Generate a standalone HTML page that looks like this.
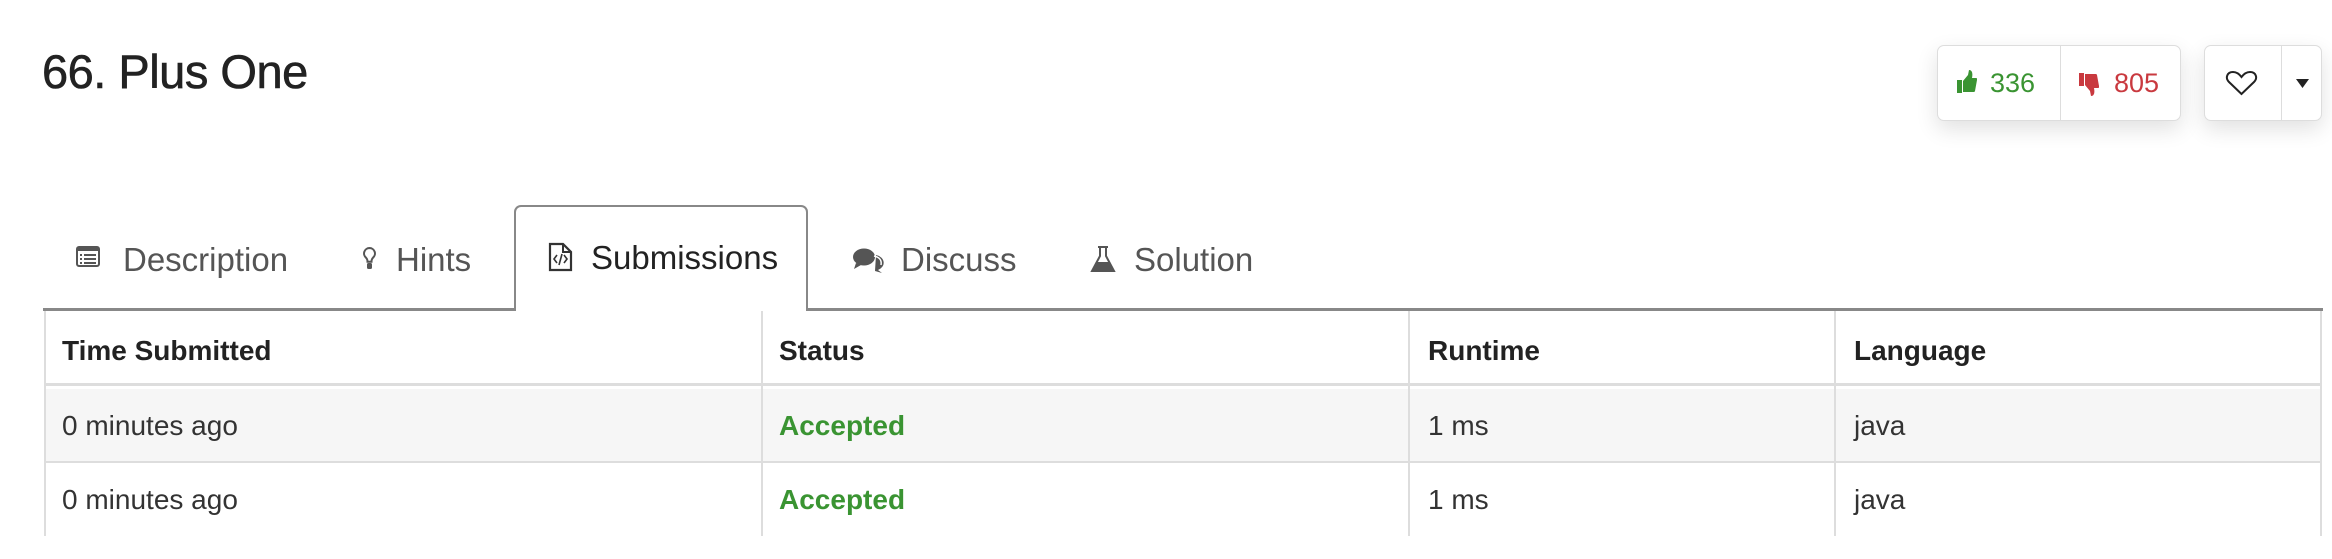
<!DOCTYPE html>
<html><head><meta charset="utf-8"><style>
*{box-sizing:border-box;margin:0;padding:0}
body{width:2332px;height:536px;background:#fff;font-family:"Liberation Sans",Arial,sans-serif;position:relative;overflow:hidden;color:#333}
.abs{position:absolute}
h1{position:absolute;left:42px;top:44px;font-size:47px;font-weight:normal;color:#222;letter-spacing:-0.5px;-webkit-text-stroke:0.6px #222}
.tabline{position:absolute;left:43px;top:308px;width:2280px;height:3px;background:#888}
.tab{position:absolute;left:514px;top:205px;width:294px;height:106px;border:2px solid #888;border-bottom:none;border-radius:7px 7px 0 0;background:#fff}
.tt{position:absolute;top:241px;font-size:33px;color:#555;white-space:nowrap}
.tbl{position:absolute;left:44px;top:311px;width:2278px;height:225px;border-left:2px solid #ddd;border-right:2px solid #ddd}
.row{position:absolute;left:0;width:100%}
.cell{position:absolute;top:0;height:100%;font-size:28px;line-height:1}
.vl{position:absolute;top:0;width:2px;height:225px;background:#ddd}
.btn{position:absolute;top:45px;height:76px;border:1px solid #ddd;border-radius:7px;background:#fff;box-shadow:0 8px 22px rgba(0,0,0,0.12)}
</style></head><body>
<h1>66. Plus One</h1>

<div class="tabline"></div>
<div class="tab"></div>
<svg class="abs" style="left:76px;top:246px" width="24" height="21" viewBox="0 0 24 21"><rect x="1" y="1" width="22" height="19" rx="2" fill="none" stroke="#555" stroke-width="2"/><rect x="1" y="1" width="22" height="4" fill="#555"/><g fill="#555"><rect x="4" y="8" width="2" height="2"/><rect x="8" y="8" width="12" height="2"/><rect x="4" y="12" width="2" height="2"/><rect x="8" y="12" width="12" height="2"/><rect x="4" y="16" width="2" height="2"/><rect x="8" y="16" width="12" height="2"/></g></svg>
<div class="tt" style="left:123px">Description</div>
<svg class="abs" style="left:362px;top:246px" width="15" height="27" viewBox="0 0 15 27"><path d="M7.5 2a5.5 5.5 0 0 0-3.5 9.7c1 1 1.5 2.5 1.5 4h4c0-1.5.5-3 1.5-4A5.5 5.5 0 0 0 7.5 2z" fill="none" stroke="#555" stroke-width="2"/><rect x="5" y="17" width="5" height="6" rx="1.5" fill="#555"/></svg>
<div class="tt" style="left:396px">Hints</div>
<svg class="abs" style="left:548px;top:242px" width="25" height="30" viewBox="0 0 25 30"><path d="M2 2h13l8 8v18H2z" fill="none" stroke="#333" stroke-width="2.2"/><path d="M15 2v8h8" fill="none" stroke="#333" stroke-width="2"/><path d="M9 13l-3 4 3 4M16 13l3 4-3 4M14 12l-3 11" fill="none" stroke="#333" stroke-width="1.6"/></svg>
<div class="tt" style="left:591px;color:#222;top:239px">Submissions</div>
<svg class="abs" style="left:852px;top:247px" width="33" height="26" viewBox="0 0 33 26"><ellipse cx="12" cy="10" rx="11" ry="8.5" fill="#555"/><path d="M4 16l-2 6 7-4z" fill="#555"/><path d="M24 8a10 8 0 0 1 2 15l4 3-7-2" fill="#555"/><path d="M22 9c5 1 8 4 7 9" fill="none" stroke="#fff" stroke-width="1.5"/></svg>
<div class="tt" style="left:901px">Discuss</div>
<svg class="abs" style="left:1090px;top:245px" width="26" height="28" viewBox="0 0 26 28"><path d="M8 2h10M10 2v9L2 26h22L16 11V2" fill="none" stroke="#555" stroke-width="2"/><path d="M6 17h14l4 9H2z" fill="#555"/></svg>
<div class="tt" style="left:1134px">Solution</div>

<div class="tbl">
 <div class="row" style="top:0;height:75px;border-bottom:3px solid #ddd">
  <div class="cell" style="left:16px;top:26px;font-weight:bold;color:#222">Time Submitted</div>
  <div class="cell" style="left:733px;top:26px;font-weight:bold;color:#222">Status</div>
  <div class="cell" style="left:1382px;top:26px;font-weight:bold;color:#222">Runtime</div>
  <div class="cell" style="left:1808px;top:26px;font-weight:bold;color:#222">Language</div>
 </div>
 <div class="row" style="top:78px;height:74px;background:#f6f6f6;border-bottom:2px solid #ddd">
  <div class="cell" style="left:16px;top:23px">0 minutes ago</div>
  <div class="cell" style="left:733px;top:23px;font-weight:bold;color:#3a9432">Accepted</div>
  <div class="cell" style="left:1382px;top:23px">1 ms</div>
  <div class="cell" style="left:1808px;top:23px">java</div>
 </div>
 <div class="row" style="top:152px;height:73px">
  <div class="cell" style="left:16px;top:23px">0 minutes ago</div>
  <div class="cell" style="left:733px;top:23px;font-weight:bold;color:#3a9432">Accepted</div>
  <div class="cell" style="left:1382px;top:23px">1 ms</div>
  <div class="cell" style="left:1808px;top:23px">java</div>
 </div>
 <div class="vl" style="left:715px"></div>
 <div class="vl" style="left:1362px"></div>
 <div class="vl" style="left:1788px"></div>
</div>

<div class="btn" style="left:1937px;width:244px"></div>
<div class="abs" style="left:2060px;top:46px;width:1px;height:74px;background:#ddd"></div>
<svg class="abs" style="left:1957px;top:70px" width="20" height="24" viewBox="0 0 20 24"><rect x="0" y="10" width="5" height="13" fill="#3a9432"/><path d="M6 11l5-6 1-5c3 0 4 3 3 8h4c1 0 1.5 1 1 2l-2 11c-.3 1-1 1-2 1H6z" fill="#3a9432"/></svg>
<div class="abs" style="left:1990px;top:68px;font-size:27px;color:#3a9432">336</div>
<svg class="abs" style="left:2079px;top:72px" width="20" height="24" viewBox="0 0 20 24"><rect x="0" y="1" width="5" height="13" fill="#c9393f"/><path d="M6 13l5 6 1 5c3 0 4-3 3-8h4c1 0 1.5-1 1-2L18 3c-.3-1-1-1-2-1H6z" fill="#c9393f"/></svg>
<div class="abs" style="left:2114px;top:68px;font-size:27px;color:#c9393f">805</div>

<div class="btn" style="left:2204px;width:118px"></div>
<div class="abs" style="left:2281px;top:46px;width:1px;height:74px;background:#ddd"></div>
<svg class="abs" style="left:2225px;top:70px" width="33" height="26" viewBox="0 0 33 26"><path d="M16.5 24L4 12C0 8 2 2 8 2c4 0 7 3 8.5 5C18 5 21 2 25 2c6 0 8 6 4 10z" fill="none" stroke="#222" stroke-width="2"/></svg>
<svg class="abs" style="left:2296px;top:79px" width="13" height="9" viewBox="0 0 13 9"><path d="M0 0h13L6.5 9z" fill="#222"/></svg>
</body></html>
